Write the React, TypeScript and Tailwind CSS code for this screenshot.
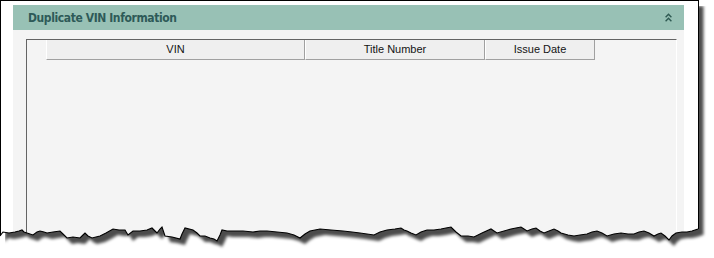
import React from "react";

const tear: [number, number][] = [
  [0, 236], [3, 232], [9, 233], [15, 232], [19, 231], [22, 230], [24, 232], [27, 233], [33, 235], [37, 232], [40, 231], [44, 232], [47, 233], [53, 232], [60, 231], [63, 234], [67, 238], [73, 237], [80, 238], [83, 235], [85, 233], [88, 236], [92, 238], [100, 236], [106, 233], [113, 229], [119, 230], [125, 230], [128, 235], [133, 231], [140, 231], [147, 230], [152, 228], [155, 231], [157, 233], [160, 229], [162, 227], [165, 236], [172, 237], [180, 239], [182, 234], [185, 228], [193, 230], [197, 233], [200, 236], [205, 236], [210, 238], [214, 239], [217, 241], [220, 235], [222, 230], [227, 231], [233, 231], [243, 231], [253, 232], [260, 231], [267, 231], [277, 232], [287, 233], [294, 235], [300, 238], [305, 234], [310, 231], [315, 230], [320, 229], [331, 230], [343, 231], [352, 232], [360, 233], [367, 234], [374, 235], [380, 232], [387, 230], [395, 229], [401, 228], [404, 230], [407, 231], [411, 233], [416, 235], [421, 232], [427, 230], [434, 230], [441, 229], [446, 228], [451, 227], [456, 232], [461, 236], [468, 236], [474, 237], [482, 233], [491, 229], [494, 231], [497, 233], [504, 231], [511, 229], [516, 228], [521, 227], [524, 229], [527, 231], [532, 229], [536, 228], [540, 231], [544, 233], [549, 231], [554, 229], [558, 231], [561, 233], [568, 235], [574, 236], [580, 235], [587, 234], [592, 232], [597, 231], [602, 233], [607, 236], [614, 234], [621, 233], [628, 234], [634, 234], [639, 232], [644, 231], [649, 233], [654, 236], [658, 234], [661, 233], [665, 236], [669, 240], [672, 236], [676, 233], [682, 232], [687, 232], [692, 231], [698, 229],
];

const tearLine = tear.map(([x, y], i) => `${i === 0 ? "M" : "L"}${x},${y}`).join(" ");
const tearRev = [...tear].reverse().map(([x, y]) => `L${x},${y}`).join(" ");
const paperPath = `M0,0 L698.5,0 L698.5,229 ${tearRev} Z`;
const belowPath = `${tearLine} L714,229 L714,258 L0,258 Z`;

function TornEdge() {
  return (
    <svg
      className="absolute left-0 top-0 pointer-events-none"
      width={714}
      height={258}
      viewBox="0 0 714 258"
    >
      <defs>
        <filter id="sh" filterUnits="userSpaceOnUse" x={0} y={0} width={714} height={258}>
          <feGaussianBlur stdDeviation={1.6} />
        </filter>
        <mask id="outside" maskUnits="userSpaceOnUse" x={0} y={0} width={714} height={258}>
          <rect x={0} y={0} width={714} height={258} fill="#fff" />
          <path d={paperPath} fill="#000" />
        </mask>
      </defs>
      <path d={belowPath} fill="#ffffff" />
      <g mask="url(#outside)">
        <path d={paperPath} transform="translate(5,6)" fill="#000" fillOpacity={0.7} filter="url(#sh)" />
      </g>
      <path d={tearLine} fill="none" stroke="#000" strokeWidth={1.1} />
    </svg>
  );
}

function Chevrons() {
  return (
    <svg width={7} height={9} viewBox="0 0 7 9" className="block">
      <path d="M0.6 4.2 L3.5 1.2 L6.4 4.2" fill="none" stroke="#2f5a52" strokeWidth={1.4} />
      <path d="M0.6 8.2 L3.5 5.2 L6.4 8.2" fill="none" stroke="#2f5a52" strokeWidth={1.4} />
    </svg>
  );
}

export default function App() {
  return (
    <div className="relative w-[714px] h-[258px] bg-white overflow-hidden">
      <div className="w-[699px] h-[258px] border border-b-0 border-black bg-white pt-[4px] pl-[12px] pr-[14px] flex flex-col">
        <div className="flex flex-col flex-1">
          <div className="h-[25px] bg-[#98c1b5] flex items-center justify-between pl-[15px] pr-[12px]">
            <span
              className="text-[12px] font-bold text-[#2e5a58] leading-none tracking-[-0.4px]"
              style={{ fontFamily: '"DejaVu Sans Condensed", "DejaVu Sans", sans-serif' }}
            >
              Duplicate VIN Information
            </span>
            <Chevrons />
          </div>
          <div className="flex-1 bg-[#f4f4f4] pt-[9px] pl-[13px] pr-[7px] flex">
            <div className="flex-1 border-l border-t border-r border-l-[#646464] border-t-[#646464] border-r-white pl-[19px]">
              <div
                className="flex text-[11px] text-[#141414]"
                style={{ fontFamily: '"Liberation Sans", Arial, sans-serif' }}
              >
                <div className="w-[259px] h-[20px] bg-[#efefef] border-l border-l-white border-r border-r-[#a0a0a0] border-b border-b-[#a0a0a0] flex items-center justify-center">
                  VIN
                </div>
                <div className="w-[180px] h-[20px] bg-[#efefef] border-l border-l-white border-r border-r-[#a0a0a0] border-b border-b-[#a0a0a0] flex items-center justify-center">
                  Title Number
                </div>
                <div className="w-[110px] h-[20px] bg-[#efefef] border-l border-l-white border-r border-r-[#a0a0a0] border-b border-b-[#a0a0a0] flex items-center justify-center">
                  Issue Date
                </div>
              </div>
            </div>
          </div>
        </div>
      </div>
      <TornEdge />
    </div>
  );
}
